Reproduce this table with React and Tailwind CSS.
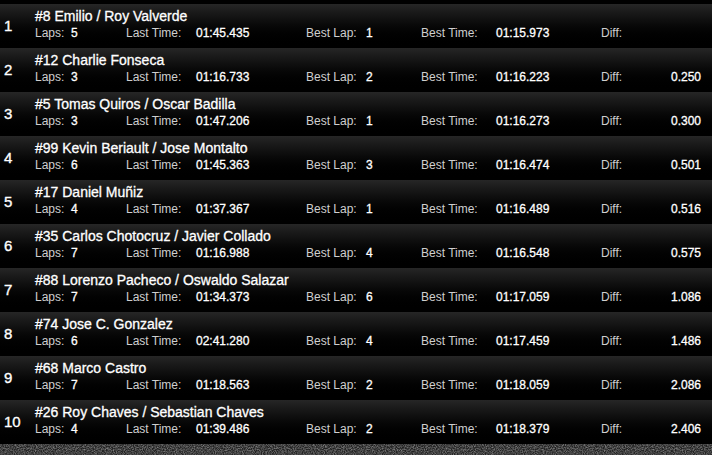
const rows = [
  { pos: 1, name: '#8 Emilio / Roy Valverde', laps: 5, last: '01:45.435', bestLap: 1, best: '01:15.973', diff: '' },
  { pos: 2, name: '#12 Charlie Fonseca', laps: 3, last: '01:16.733', bestLap: 2, best: '01:16.223', diff: '0.250' },
  { pos: 3, name: '#5 Tomas Quiros / Oscar Badilla', laps: 3, last: '01:47.206', bestLap: 1, best: '01:16.273', diff: '0.300' },
  { pos: 4, name: '#99 Kevin Beriault / Jose Montalto', laps: 6, last: '01:45.363', bestLap: 3, best: '01:16.474', diff: '0.501' },
  { pos: 5, name: '#17 Daniel Muñiz', laps: 4, last: '01:37.367', bestLap: 1, best: '01:16.489', diff: '0.516' },
  { pos: 6, name: '#35 Carlos Chotocruz / Javier Collado', laps: 7, last: '01:16.988', bestLap: 4, best: '01:16.548', diff: '0.575' },
  { pos: 7, name: '#88 Lorenzo Pacheco / Oswaldo Salazar', laps: 7, last: '01:34.373', bestLap: 6, best: '01:17.059', diff: '1.086' },
  { pos: 8, name: '#74 Jose C. Gonzalez', laps: 6, last: '02:41.280', bestLap: 4, best: '01:17.459', diff: '1.486' },
  { pos: 9, name: '#68 Marco Castro', laps: 7, last: '01:18.563', bestLap: 2, best: '01:18.059', diff: '2.086' },
  { pos: 10, name: '#26 Roy Chaves / Sebastian Chaves', laps: 4, last: '01:39.486', bestLap: 2, best: '01:18.379', diff: '2.406' },
]

function Row({ r }) {
  return (
    <div className="flex h-[44px] bg-gradient-to-b from-[#262626] to-[#000000]">
      <div className="w-[35px] shrink-0 flex items-center pl-[4px] text-[15px] leading-[18px] text-white [-webkit-text-stroke:0.35px_white]">
        {r.pos}
      </div>
      <div className="flex-1 pt-[4px]">
        <div className="text-[14px] leading-[16px] text-white whitespace-nowrap [-webkit-text-stroke:0.3px_white]">{r.name}</div>
        <div className="mt-[2px] grid grid-cols-[36px_55px_70px_110px_60px_55px_75px_105px_100px] text-[12px] leading-[14px] whitespace-nowrap">
          <span className="text-[#cfcfcf]">Laps:</span>
          <span className="text-white [-webkit-text-stroke:0.3px_white]">{r.laps}</span>
          <span className="text-[#cfcfcf]">Last Time:</span>
          <span className="text-white [-webkit-text-stroke:0.3px_white]">{r.last}</span>
          <span className="text-[#cfcfcf]">Best Lap:</span>
          <span className="text-white [-webkit-text-stroke:0.3px_white]">{r.bestLap}</span>
          <span className="text-[#cfcfcf]">Best Time:</span>
          <span className="text-white [-webkit-text-stroke:0.3px_white]">{r.best}</span>
          <span className="flex justify-between">
            <span className="text-[#cfcfcf]">Diff:</span>
            <span className="text-white [-webkit-text-stroke:0.3px_white]">{r.diff}</span>
          </span>
        </div>
      </div>
    </div>
  )
}

export default function App() {
  return (
    <div className="w-[712px] h-[455px] overflow-hidden bg-black font-['Liberation_Sans',Arial,sans-serif] antialiased">
      <div className="h-[4px] bg-black" />
      {rows.map((r) => (
        <Row key={r.pos} r={r} />
      ))}
      <svg className="block" width="712" height="11">
        <filter id="grain">
          <feTurbulence type="fractalNoise" baseFrequency="0.9" numOctaves="2" seed="3" />
          <feColorMatrix type="matrix" values="0 0 0 0 0.27  0 0 0 0 0.27  0 0 0 0 0.27  0 0 0 1.6 -0.5" />
        </filter>
        <rect width="712" height="11" fill="#222222" />
        <rect width="712" height="11" filter="url(#grain)" />
      </svg>
    </div>
  )
}
